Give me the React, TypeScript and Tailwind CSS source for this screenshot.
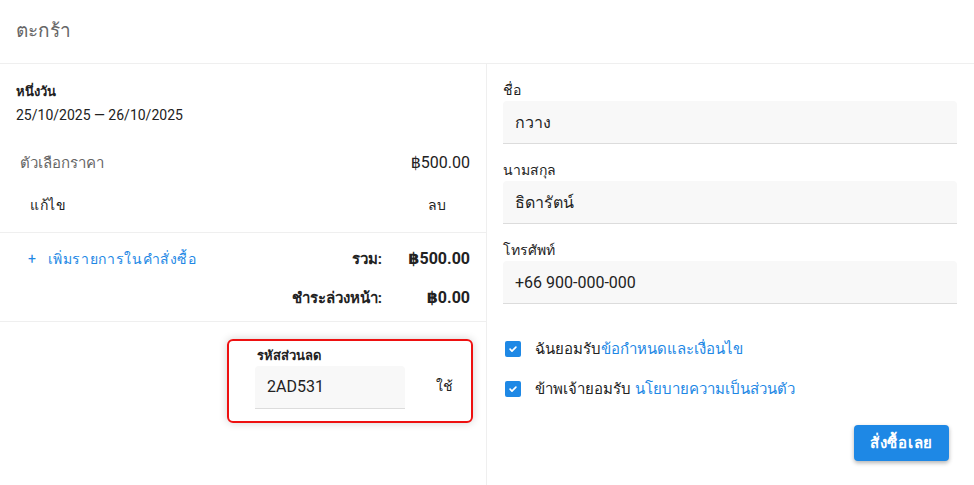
import React from "react";

function Check() {
  return (
    <span className="flex h-[16px] w-[16px] items-center justify-center rounded-[2px] bg-[#1e88e5]">
      <svg width="10" height="10" viewBox="0 0 24 24" fill="none" stroke="white" strokeWidth="4" strokeLinecap="round" strokeLinejoin="round">
        <path d="M5 12.5l4.5 4.5L19 7.5" />
      </svg>
    </span>
  );
}

function Field({ label, value }: { label: string; value: string }) {
  return (
    <div className="flex flex-col">
      <div className="text-[14px] leading-[20px] text-[#222] font-medium">{label}</div>
      <div className="mt-[1px] flex h-[43px] items-center rounded-t-[4px] border-b border-[#dcdcdc] bg-[#f8f8f8] px-[12px] pt-[2px] text-[16px] text-[#222]">
        {value}
      </div>
    </div>
  );
}

export default function App() {
  return (
    <div className="h-[485px] w-[974px] overflow-hidden bg-white text-[#222]" style={{ fontFamily: "Roboto, 'Noto Sans', 'DejaVu Sans', sans-serif" }}>
      <div className="flex h-[64px] items-center border-b border-[#efefef] px-[16px] text-[19px] text-[#666]">ตะกร้า</div>
      <div className="flex h-[421px]">
        <div className="flex w-[487px] flex-col border-r border-[#efefef]">
          <div className="px-[16px] pt-[18px]">
            <div className="text-[13px] font-bold leading-[20px]">หนึ่งวัน</div>
            <div className="mt-[3px] text-[14px] leading-[20px]">25/10/2025 — 26/10/2025</div>
            <div className="mt-[26px] flex items-center justify-between pl-[4px]">
              <span className="text-[15px] text-[#666]">ตัวเลือกราคา</span>
              <span className="text-[16px]">฿500.00</span>
            </div>
            <div className="mt-[20px] flex items-center justify-between pl-[14px] pr-[23px] text-[14px] tracking-[0.05em]">
              <span>แก้ไข</span>
              <span>ลบ</span>
            </div>
          </div>
          <div className="mt-[16px] border-b border-[#efefef]" />
          <div className="flex h-[88px] justify-between px-[16px] pt-[16px]">
            <div className="pl-[12px] text-[14px] tracking-[0.045em] text-[#1e88e5]">
              <span className="mr-[11px]">+</span>เพิ่มรายการในคำสั่งซื้อ
            </div>
            <div className="grid grid-cols-[auto_88px] gap-y-[6px] text-[15px] font-bold leading-[20px]">
              <span className="text-right">รวม:</span>
              <span className="text-right text-[16px]">฿500.00</span>
              <span className="text-right">ชำระล่วงหน้า:</span>
              <span className="text-right text-[16px]">฿0.00</span>
            </div>
          </div>
          <div className="border-b border-[#efefef]" />
          <div className="flex justify-end pr-[13px] pt-[17px]">
            <div className="flex h-[84px] w-[246px] items-end rounded-[6px] border-2 border-[#ee1111] pb-[12px] pl-[26px] pr-[18px] shadow-[0_0_8px_rgba(0,0,0,0.18)]">
              <div className="flex flex-col">
                <div className="text-[13px] font-bold leading-[20px] pl-[2px]">รหัสส่วนลด</div>
                <div className="flex h-[43px] w-[150px] items-center rounded-t-[4px] border-b border-[#dcdcdc] bg-[#f8f8f8] px-[12px] text-[16px]">2AD531</div>
              </div>
              <div className="ml-auto mb-[12px] text-[14px]">ใช้</div>
            </div>
          </div>
        </div>
        <div className="flex flex-1 flex-col pl-[16px] pr-[17px] pt-[16px]">
          <div className="flex flex-col gap-[16px]">
            <Field label="ชื่อ" value="กวาง" />
            <Field label="นามสกุล" value="ธิดารัตน์" />
            <Field label="โทรศัพท์" value="+66 900-000-000" />
          </div>
          <div className="mt-[34px] flex flex-col gap-[17px] pl-[2px] text-[15px]">
            <div className="flex items-center gap-[14px]">
              <Check />
              <span>ฉันยอมรับ<span className="text-[#1e88e5]">ข้อกำหนดและเงื่อนไข</span></span>
            </div>
            <div className="flex items-center gap-[14px]">
              <Check />
              <span>ข้าพเจ้ายอมรับ <span className="text-[#1e88e5]">นโยบายความเป็นส่วนตัว</span></span>
            </div>
          </div>
          <div className="mt-[25px] flex justify-end pr-[8px]">
            <button className="h-[36px] w-[95px] rounded-[4px] bg-[#1e88e5] text-[15px] font-bold tracking-[0.05em] text-white shadow-[0_2px_4px_rgba(0,0,0,0.3)]">สั่งซื้อเลย</button>
          </div>
        </div>
      </div>
    </div>
  );
}
